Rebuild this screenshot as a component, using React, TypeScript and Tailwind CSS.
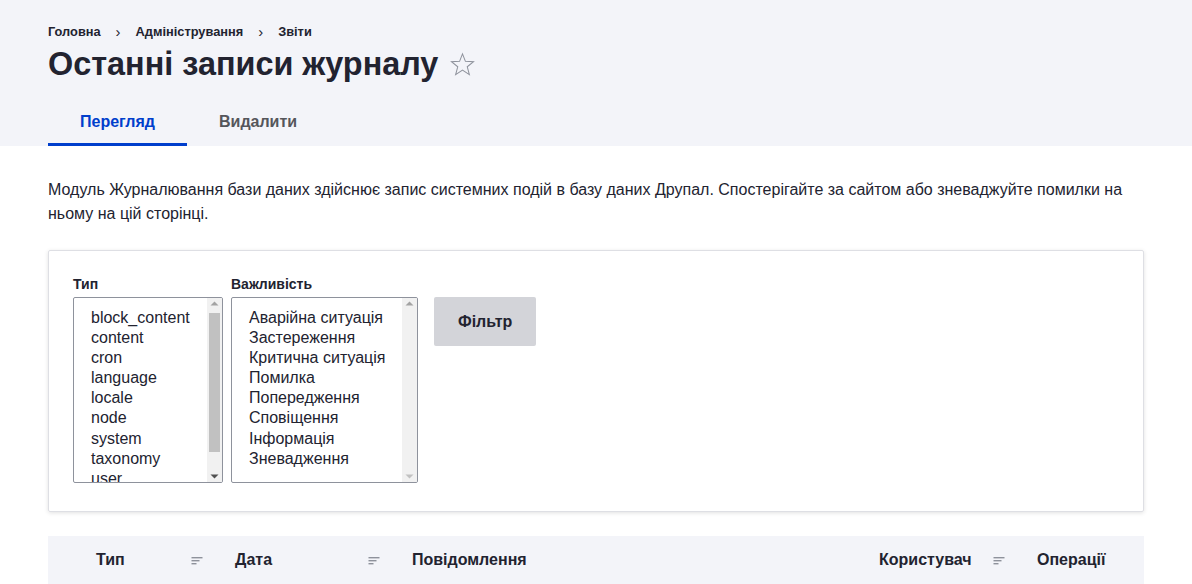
import React from "react";

const SortIcon = () => (
  <svg width="12" height="9" viewBox="0 0 12 9" className="shrink-0">
    <rect x="0.5" y="1" width="11" height="1.4" fill="#8e929c" />
    <rect x="0.5" y="4" width="8" height="1.4" fill="#8e929c" />
    <rect x="0.5" y="7" width="5" height="1.4" fill="#8e929c" />
  </svg>
);

const Arrow = ({ up, color }: { up: boolean; color: string }) => (
  <svg width="15" height="12" viewBox="0 0 15 12">
    {up ? <polygon points="3.5,7.5 7.5,3.5 11.5,7.5" fill={color} /> : <polygon points="3.5,4.5 11.5,4.5 7.5,8.5" fill={color} />}
  </svg>
);

function ListBox({ items, width, thumb }: { items: string[]; width: string; thumb: boolean }) {
  return (
    <div className={`${width} h-[186px] border border-[#8e929c] rounded-[2px] bg-white flex overflow-hidden`}>
      <div className="flex-1 pt-[10px] pl-[17px] overflow-hidden">
        {items.map((it) => (
          <div key={it} className="h-[20.1px] leading-[20px] text-[16px] text-[#222330] whitespace-nowrap">
            {it}
          </div>
        ))}
      </div>
      <div className="w-[15px] bg-[#f1f1f1] flex flex-col">
        <Arrow up color="#a3a3a3" />
        <div className="flex-1 px-[2px] pt-[3px] pb-[18px] flex">
          {thumb && <div className="w-full h-[139px] bg-[#c1c1c1]" />}
        </div>
        <Arrow up={false} color={thumb ? "#505050" : "#c1c1c1"} />
      </div>
    </div>
  );
}

export default function App() {
  const font = { fontFamily: '"Liberation Sans", Arial, sans-serif' };
  return (
    <div className="w-[1192px] h-[584px] overflow-hidden bg-white text-[#222330]" style={font}>
      <div className="bg-[#f3f4f9] px-12 pt-[23px]">
        <nav className="flex items-center h-[18px] text-[12.8px] font-bold">
          <span>Головна</span>
          <span className="font-normal text-[15px] ml-[15px] mr-[15px]">›</span>
          <span>Адміністрування</span>
          <span className="font-normal text-[15px] ml-[15px] mr-[15px]">›</span>
          <span>Звіти</span>
        </nav>
        <div className="flex items-center mt-[4px] h-[38px]">
          <h1 className="text-[32.4px] font-bold leading-[38px]">Останні записи журналу</h1>
          <svg width="27" height="27" viewBox="0 0 24 24" className="ml-[11px]">
            <polygon
              points="12,2.5 14.6,9.2 21.8,9.5 16.2,14 18.1,21 12,17 5.9,21 7.8,14 2.2,9.5 9.4,9.2"
              fill="none"
              stroke="#8e929c"
              strokeWidth="0.9"
              strokeLinejoin="miter"
            />
          </svg>
        </div>
        <div className="flex mt-[15px] h-[48px]">
          <div className="px-8 flex items-center text-[16px] font-bold text-[#003ecc] border-b-[3px] border-[#003ecc] pt-[3px]">
            Перегляд
          </div>
          <div className="px-8 flex items-center text-[16px] font-bold text-[#55565b] pt-[3px] border-b-[3px] border-transparent">
            Видалити
          </div>
        </div>
      </div>

      <div className="px-12 pt-[32px]">
        <p className="text-[16px] leading-[24px]">
          Модуль Журналювання бази даних здійснює запис системних подій в базу даних Друпал. Спостерігайте за сайтом або зневаджуйте помилки на ньому на цій сторінці.
        </p>

        <div className="mt-[24px] border border-[#dedfe4] rounded-[2px] shadow-[0_1px_4px_rgba(0,0,0,0.12)] pl-[24px] pt-[24px] pb-[28px] flex items-start">
          <div className="flex flex-col">
            <label className="text-[14px] font-bold leading-[18px] mb-[4px]">Тип</label>
            <ListBox
              width="w-[150px]"
              thumb
              items={["block_content", "content", "cron", "language", "locale", "node", "system", "taxonomy", "user"]}
            />
          </div>
          <div className="flex flex-col ml-[8px]">
            <label className="text-[14px] font-bold leading-[18px] mb-[4px]">Важливість</label>
            <ListBox
              width="w-[187px]"
              thumb={false}
              items={[
                "Аварійна ситуація",
                "Застереження",
                "Критична ситуація",
                "Помилка",
                "Попередження",
                "Сповіщення",
                "Інформація",
                "Зневадження",
              ]}
            />
          </div>
          <button className="ml-[16px] mt-[22px] h-[49px] px-6 bg-[#d3d4d9] rounded-[2px] text-[16px] font-bold text-[#222330]">
            Фільтр
          </button>
        </div>

        <div className="mt-[24px] h-[48px] bg-[#f3f4f9] flex items-center text-[16px] font-bold">
          <div className="w-[32px]" />
          <div className="w-[139px] px-4 flex items-center justify-between">
            <span>Тип</span>
            <SortIcon />
          </div>
          <div className="w-[177px] px-4 flex items-center justify-between">
            <span>Дата</span>
            <SortIcon />
          </div>
          <div className="w-[467px] px-4">
            <span>Повідомлення</span>
          </div>
          <div className="w-[158px] px-4 flex items-center justify-between">
            <span>Користувач</span>
            <SortIcon />
          </div>
          <div className="flex-1 px-4">
            <span>Операції</span>
          </div>
        </div>
      </div>
    </div>
  );
}
